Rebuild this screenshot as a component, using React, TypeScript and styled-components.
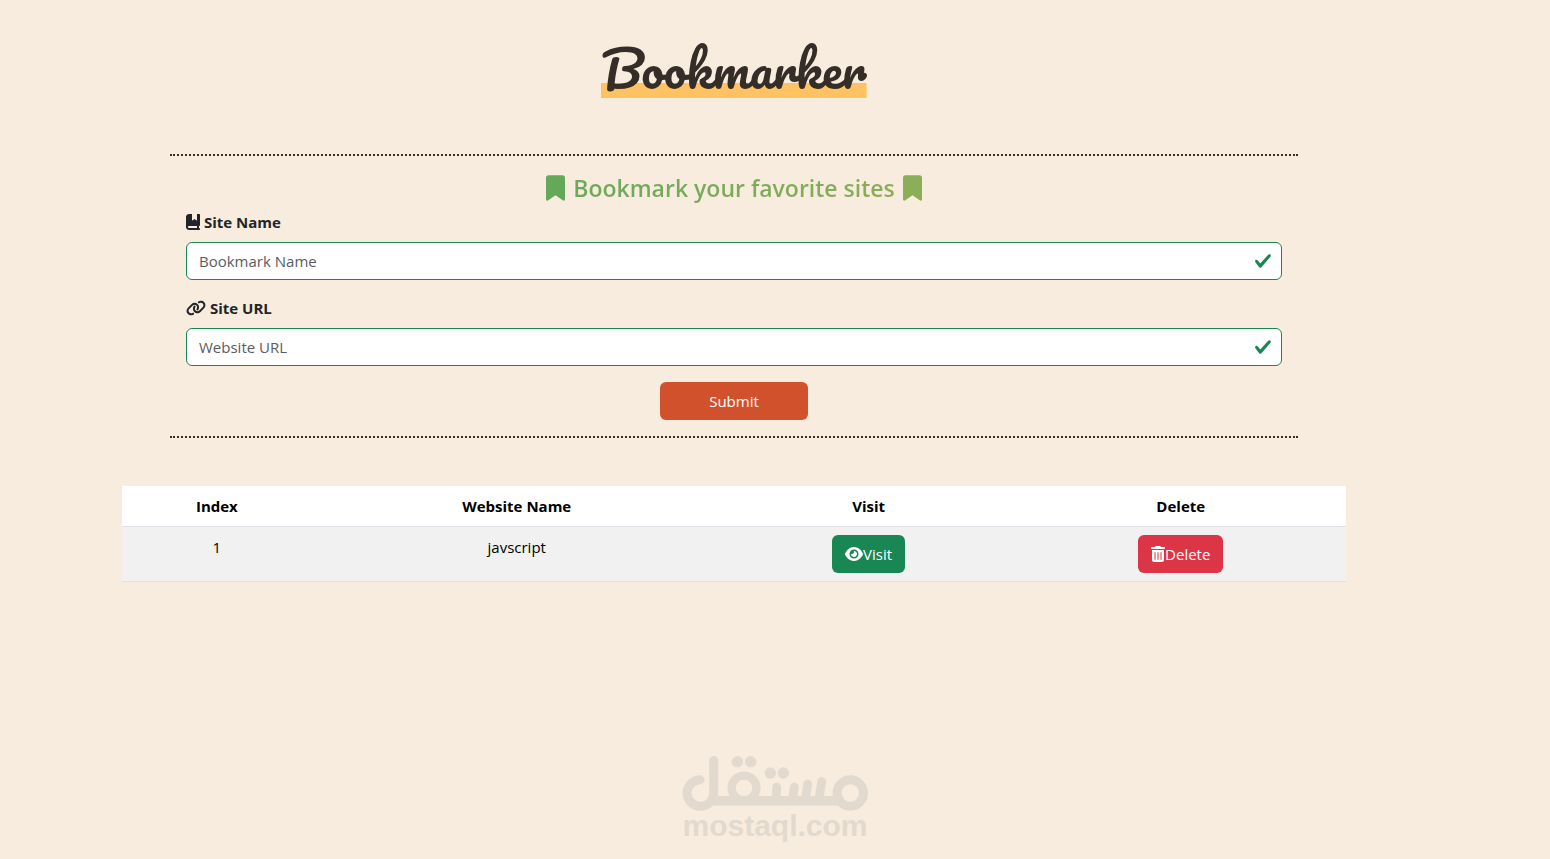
import React, { useState } from "react";
import styled, { createGlobalStyle } from "styled-components";
import { FaBookBookmark, FaBookmark, FaEye, FaLink, FaTrashCan } from "react-icons/fa6";

const GlobalStyle = createGlobalStyle`
  *, *::before, *::after { box-sizing: border-box; }
  body {
    margin: 0;
    background: #f8ecde;
    color: #212529;
    font-family: "Segoe UI", "Open Sans", "Noto Sans", sans-serif;
    font-size: 15px;
    line-height: 24px;
  }
`;

const Page = styled.div`
  display: flex;
  flex-direction: column;
  min-height: 100vh;
`;

const Main = styled.main`
  width: 100%;
  padding: 32px 82px 0 0;
`;

const Container = styled.div`
  max-width: 1320px;
  margin: 0 auto;
  padding: 0 48px;
`;

const Title = styled.h1`
  width: fit-content;
  margin: 0 auto 56px;
  padding-top: 6px;
  background: linear-gradient(#ffc262, #ffc262) bottom / 100% 15px no-repeat;
  color: #352d27;
  font-family: Pacifico, Lato, sans-serif;
  font-size: 50px;
  font-weight: 500;
  line-height: 60px;
`;

const Form = styled.form`
  margin: 0 48px 48px;
  padding: 16px;
  border-top: 2px dotted #352d27;
  border-bottom: 2px dotted #352d27;
`;

const Heading = styled.h2`
  display: flex;
  align-items: center;
  justify-content: center;
  gap: 8px;
  margin: 0 0 6px;
  font-size: 23px;
  font-weight: 600;
  line-height: 32px;
`;

const HeadingText = styled.span`
  background: linear-gradient(90deg, #6ba95a, #8aad58);
  background-clip: text;
  -webkit-background-clip: text;
  color: transparent;
`;

const HeadingIcon = styled(FaBookmark)<{ $color: string }>`
  width: 19px;
  height: 26px;
  color: ${(p) => p.$color};
`;

const Field = styled.div`
  margin-bottom: 16px;
`;

const Label = styled.label<{ $iconWidth: number }>`
  display: flex;
  align-items: center;
  gap: 4px;
  margin-bottom: 8px;
  font-weight: 700;

  svg { width: ${(p) => p.$iconWidth}px; height: 16px; }
`;

const InputWrap = styled.div`
  display: flex;
  align-items: center;
  height: 38px;
  padding: 0 9px 0 12px;
  border: 1px solid #198754;
  border-radius: 6px;
  background: #fff;
`;

const Input = styled.input`
  flex: 1;
  min-width: 0;
  padding: 0;
  border: 0;
  outline: 0;
  background: transparent;
  color: #212529;
  font: inherit;

  &::placeholder { color: #595c5f; opacity: 1; }
`;

const Button = styled.button<{ $color: string; $wide?: boolean; $iconWidth?: number }>`
  display: ${(p) => (p.$wide ? "flex" : "inline-flex")};
  align-items: center;
  justify-content: center;
  width: ${(p) => (p.$wide ? "148px" : "auto")};
  height: 38px;
  margin: 0 auto;
  padding: 0 13px;
  border: 0;
  border-radius: 6px;
  background: ${(p) => p.$color};
  color: #fff;
  font: inherit;
  vertical-align: top;
  cursor: pointer;

  svg { width: ${(p) => p.$iconWidth ?? 16}px; height: 16px; }
`;

const Table = styled.table`
  width: 100%;
  table-layout: fixed;
  border-collapse: collapse;
  color: #000;
  text-align: center;
`;

const Cell = styled.td`
  padding: 8px;
  border-bottom: 1px solid #dee2e6;
  background: #f1f1f1;
  vertical-align: top;
`;

const HeadCell = styled.th<{ $width: string }>`
  width: ${(p) => p.$width};
  padding: 8px;
  border-bottom: 1px solid #dee2e6;
  background: #fff;
  font-weight: 700;
`;

const Footer = styled.footer`
  display: flex;
  flex-direction: column;
  align-items: center;
  margin-top: auto;
  padding-bottom: 18px;
  color: #e2dacf;
`;

const BrandName = styled.span`
  font-family: "Liberation Sans", Arial, sans-serif;
  font-size: 30px;
  font-weight: 700;
  line-height: 30px;
`;

function Check() {
  return (
    <svg width="18" height="18" viewBox="0 0 8 8" fill="#198754" aria-hidden="true">
      <path d="M2.3 6.73.6 4.53c-.4-1.04.46-1.4 1.1-.8l1.1 1.4 3.4-3.8c.6-.63 1.6-.27 1.2.7l-4 4.6c-.43.5-.8.4-1.1.1z" />
    </svg>
  );
}

function BrandMark() {
  return (
    <svg width="188" height="56" viewBox="0 0 188 56" fill="none" stroke="currentColor" strokeLinecap="round" aria-hidden="true">
      <path d="M19 24.700A13.300 13.300 0 1 0 32.700 38V5.500" strokeWidth="9" />
      <path d="M28 45.700H162" strokeWidth="9.400" strokeLinecap="butt" />
      <circle cx="63" cy="33" r="12.400" strokeWidth="8.200" />
      <circle cx="169.300" cy="38" r="13.200" strokeWidth="9" />
      <path d="M95 44L95.700 32M111.500 44L113.300 32M124.500 44L126.700 29M138 44L140.700 26.500" strokeWidth="8.800" />
      <g fill="currentColor" stroke="none">
        <circle cx="56.300" cy="6.800" r="5.700" />
        <circle cx="69.700" cy="6.800" r="5.700" />
        <circle cx="89.300" cy="18" r="5.700" />
        <circle cx="102.300" cy="18" r="5.700" />
      </g>
    </svg>
  );
}

export default function App() {
  const [name, setName] = useState("");
  const [url, setUrl] = useState("");

  return (
    <Page>
      <GlobalStyle />
      <Main>
        <Container>
          <Title>Bookmarker</Title>
          <Form onSubmit={(e) => e.preventDefault()}>
            <Heading>
              <HeadingIcon $color="#66a859" />
              <HeadingText>Bookmark your favorite sites</HeadingText>
              <HeadingIcon $color="#8bae58" />
            </Heading>
            <Field>
              <Label htmlFor="site-name" $iconWidth={14}><FaBookBookmark />Site Name</Label>
              <InputWrap>
                <Input id="site-name" placeholder="Bookmark Name" value={name} onChange={(e) => setName(e.target.value)} />
                <Check />
              </InputWrap>
            </Field>
            <Field>
              <Label htmlFor="site-url" $iconWidth={20}><FaLink />Site URL</Label>
              <InputWrap>
                <Input id="site-url" placeholder="Website URL" value={url} onChange={(e) => setUrl(e.target.value)} />
                <Check />
              </InputWrap>
            </Field>
            <Button type="submit" $color="#d1512d" $wide>Submit</Button>
          </Form>
          <Table>
            <thead>
              <tr>
                <HeadCell $width="15.5%">Index</HeadCell>
                <HeadCell $width="33.5%">Website Name</HeadCell>
                <HeadCell $width="24%">Visit</HeadCell>
                <HeadCell $width="27%">Delete</HeadCell>
              </tr>
            </thead>
            <tbody>
              <tr>
                <Cell>1</Cell>
                <Cell>javscript</Cell>
                <Cell><Button type="button" $color="#198754" $iconWidth={18}><FaEye />Visit</Button></Cell>
                <Cell><Button type="button" $color="#dc3545" $iconWidth={14}><FaTrashCan />Delete</Button></Cell>
              </tr>
            </tbody>
          </Table>
        </Container>
      </Main>
      <Footer>
        <BrandMark />
        <BrandName>mostaql.com</BrandName>
      </Footer>
    </Page>
  );
}
